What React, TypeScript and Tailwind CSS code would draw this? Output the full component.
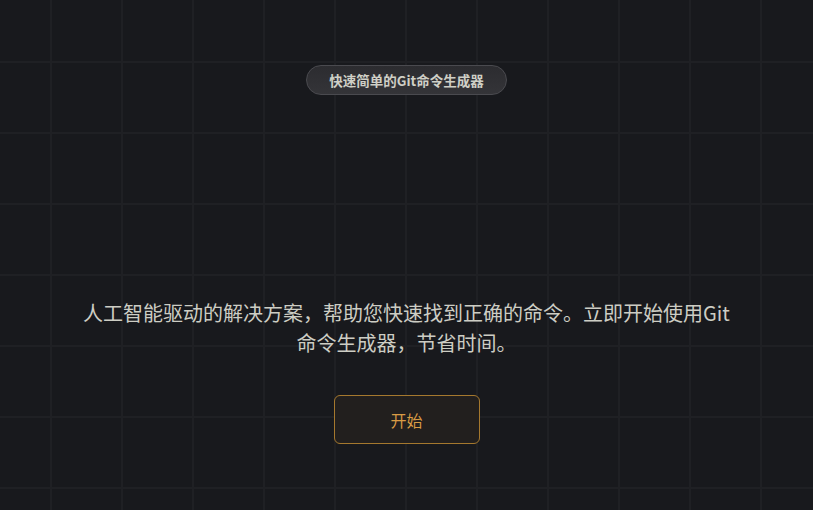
import React from "react";

export default function App() {
  return (
    <div
      className="min-h-screen w-full flex flex-col items-center bg-[#18191d] bg-[linear-gradient(to_right,#1f2024_2px,transparent_2px),linear-gradient(to_bottom,#1f2024_2px,transparent_2px)] bg-[size:71px_71px] bg-[position:50px_61px] font-['Noto_Sans_CJK_SC','Noto_Sans',sans-serif]"
    >
      <div className="mt-[65px] h-[30px] px-[22px] flex items-center rounded-full border border-[#4a4a4f] bg-[linear-gradient(to_bottom,#2c2c30,#343438)] text-[13.5px] font-bold text-[#cfcfc6]">
        快速简单的Git命令生成器
      </div>

      <p className="mt-[203px] max-w-[664px] text-center text-[20px] leading-[30px] text-[#cdcdc4]">
        人工智能驱动的解决方案，帮助您快速找到正确的命令。立即开始使用Git命令生成器，节省时间。
      </p>

      <button
        type="button"
        className="mt-[37px] w-[146px] h-[49px] rounded-md border border-[#a5782e] bg-[#221f1e] text-[16px] text-[#d99b45]"
      >
        开始
      </button>
    </div>
  );
}
